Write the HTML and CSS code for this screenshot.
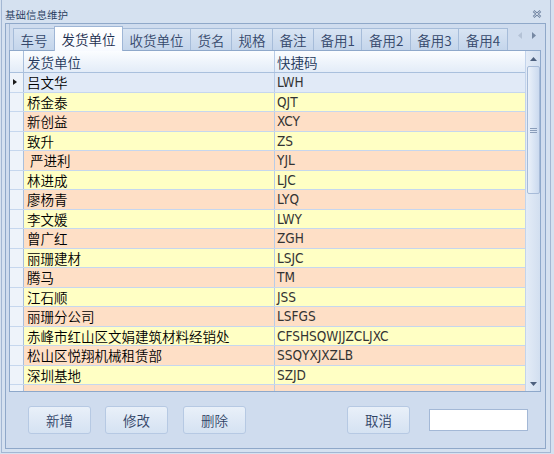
FILE: index.html
```html
<!DOCTYPE html>
<html>
<head>
<meta charset="utf-8">
<link rel="stylesheet" href="styles.css">
</head>
<body>
<div class="window">
  <div class="titlebar">
    <span class="title">基础信息维护</span>
    <svg class="close" width="10" height="8" viewBox="0 0 10 8">
      <path d="M1.5 1 L8.5 7 M8.5 1 L1.5 7" stroke="#6a7f9e" stroke-width="2.4" fill="none"/>
      <path d="M1.5 1 L8.5 7 M8.5 1 L1.5 7" stroke="#eef3fa" stroke-width="0.8" fill="none"/>
    </svg>
  </div>
  <div class="frame">
    <div class="tabstrip">
      <div class="tab">车号</div>
      <div class="tab active">发货单位</div>
      <div class="tab">收货单位</div>
      <div class="tab">货名</div>
      <div class="tab">规格</div>
      <div class="tab">备注</div>
      <div class="tab">备用1</div>
      <div class="tab">备用2</div>
      <div class="tab">备用3</div>
      <div class="tab">备用4</div>
      <div class="tabnav">
        <svg width="4" height="7" viewBox="0 0 4 7"><path d="M4 0 L0 3.5 L4 7 Z" fill="#b4c2d6"/></svg>
        <svg width="4" height="7" viewBox="0 0 4 7"><path d="M0 0 L4 3.5 L0 7 Z" fill="#7688a3"/></svg>
      </div>
    </div>
    <div class="grid">
      <div class="gridmain">
        <div class="ghead">
          <div class="rh"></div>
          <div class="c1">发货单位</div>
          <div class="c2">快捷码</div>
        </div>
        <div class="gbody">
          <div class="row sel"><div class="rh"><svg width="4" height="6" viewBox="0 0 4 6"><path d="M0 0 L4 3 L0 6 Z" fill="#1a1a1a"/></svg></div><div class="c1">吕文华</div><div class="c2">LWH</div></div>
          <div class="row y"><div class="rh"></div><div class="c1">桥金泰</div><div class="c2">QJT</div></div>
          <div class="row p"><div class="rh"></div><div class="c1">新创益</div><div class="c2">XCY</div></div>
          <div class="row y"><div class="rh"></div><div class="c1">致升</div><div class="c2">ZS</div></div>
          <div class="row p"><div class="rh"></div><div class="c1">&nbsp;严进利</div><div class="c2">YJL</div></div>
          <div class="row y"><div class="rh"></div><div class="c1">林进成</div><div class="c2">LJC</div></div>
          <div class="row p"><div class="rh"></div><div class="c1">廖杨青</div><div class="c2">LYQ</div></div>
          <div class="row y"><div class="rh"></div><div class="c1">李文媛</div><div class="c2">LWY</div></div>
          <div class="row p"><div class="rh"></div><div class="c1">曾广红</div><div class="c2">ZGH</div></div>
          <div class="row y"><div class="rh"></div><div class="c1">丽珊建材</div><div class="c2">LSJC</div></div>
          <div class="row p"><div class="rh"></div><div class="c1">腾马</div><div class="c2">TM</div></div>
          <div class="row y"><div class="rh"></div><div class="c1">江石顺</div><div class="c2">JSS</div></div>
          <div class="row p"><div class="rh"></div><div class="c1">丽珊分公司</div><div class="c2">LSFGS</div></div>
          <div class="row y"><div class="rh"></div><div class="c1">赤峰市红山区文娟建筑材料经销处</div><div class="c2">CFSHSQWJJZCLJXC</div></div>
          <div class="row p"><div class="rh"></div><div class="c1">松山区悦翔机械租赁部</div><div class="c2">SSQYXJXZLB</div></div>
          <div class="row y"><div class="rh"></div><div class="c1">深圳基地</div><div class="c2">SZJD</div></div>
          <div class="row p"><div class="rh"></div><div class="c1"></div><div class="c2"></div></div>
        </div>
      </div>
      <div class="vscroll">
        <div class="sarrow top"><svg width="7" height="4" viewBox="0 0 7 4"><path d="M0 4 L3.5 0 L7 4 Z" fill="#4d607e"/></svg></div>
        <div class="thumb"><svg width="7" height="5" viewBox="0 0 7 5"><path d="M0 0.5 H7 M0 2.5 H7 M0 4.5 H7" stroke="#8a9dba" stroke-width="1"/></svg></div>
        <div class="track"></div>
        <div class="sarrow bottom"><svg width="7" height="4" viewBox="0 0 7 4"><path d="M0 0 L3.5 4 L7 0 Z" fill="#4d607e"/></svg></div>
      </div>
    </div>
    <div class="buttons">
      <div class="btn b1">新增</div>
      <div class="btn b2">修改</div>
      <div class="btn b3">删除</div>
      <div class="btn b4">取消</div>
      <div class="textbox"></div>
    </div>
  </div>
</div>
</body>
</html>
```
FILE: styles.css
```css
* { box-sizing: border-box; margin: 0; padding: 0; }
html, body { width: 554px; height: 454px; overflow: hidden; }
body {
  background: #d5e1f0;
  font-family: "Noto Sans CJK SC", "Noto Sans", sans-serif;
  font-size: 13.5px;
  font-weight: 350;
  color: #000;
}
.window {
  margin-left: 1px;
  width: 550px;
  height: 453px;
  border: 1px solid #a3b7d3;
  border-top: 0;
  background: #d5e1f0;
  display: flex;
  flex-direction: column;
}
.titlebar {
  height: 23px;
  display: flex;
  align-items: center;
  padding: 5px 8px 0 3px;
  font-size: 10.5px;
  color: #1e395b;
}
.title { flex: 1; }
.close { display: block; }

.frame {
  margin-left: 3px;
  width: 541px;
  height: 426px;
  border: 1px solid #8fa8c9;
  background: #cfdcee;
  padding: 0 4px 0 3px;
  display: flex;
  flex-direction: column;
}
.tabstrip {
  height: 26px;
  display: flex;
  align-items: flex-end;
  padding-left: 3px;
  border-left: 1px solid #a9bdd8;
}
.tab {
  height: 22px;
  padding: 0 6.5px;
  border: 1px solid #a6bcd9;
  border-bottom: 0;
  margin-right: -1px;
  display: flex;
  align-items: center;
  color: #34476a;
  background: linear-gradient(#d8e4f3, #c4d5eb);
  white-space: nowrap;
}
.tab.active {
  height: 25px;
  margin-bottom: -1px;
  position: relative;
  z-index: 1;
  background: linear-gradient(#ffffff, #f7faff);
  color: #1a2d4d;
  border-color: #9fb6d6;
}
.tabnav {
  align-self: flex-start;
  margin-top: 8px;
  margin-left: 11px;
  display: flex;
  gap: 10px;
}
.tabnav svg { display: block; }

.grid {
  height: 342px;
  border: 1px solid #8ea8ca;
  background: #fff;
  display: flex;
}
.gridmain {
  width: 515px;
  display: flex;
  flex-direction: column;
  overflow: hidden;
}
.ghead {
  height: 22px;
  flex: none;
  display: flex;
  border-bottom: 1px solid #a9c0dd;
  background: linear-gradient(#fbfdff, #e3ecf8);
  color: #24375a;
}
.rh {
  width: 14px;
  flex: none;
  border-right: 1px solid #a9bfdc;
  background: #eef3fa;
  display: flex;
  align-items: center;
  padding-left: 3px;
}
.rh svg { display: block; }
.ghead .rh { background: transparent; }
.c1 {
  width: 251px;
  flex: none;
  border-right: 1px solid #b8cce7;
  padding-left: 3px;
  display: flex;
  align-items: center;
  white-space: pre;
  overflow: hidden;
}
.c2 {
  flex: 1;
  padding-left: 2px;
  display: flex;
  align-items: center;
  overflow: hidden;
}
.gbody {
  flex: 1;
  overflow: hidden;
}
.row {
  height: 19.5px;
  display: flex;
  border-bottom: 1px solid #c6d7ee;
}
.row .c2 {
  font-family: "DejaVu Sans Condensed", "DejaVu Sans", sans-serif;
  font-stretch: condensed;
  font-weight: 400;
  font-size: 13.5px;
  color: #333;
}
.row.y { background: #ffffc4; }
.row.p { background: #fedfc6; }
.row.sel { background: #e1eaf7; }

.vscroll {
  width: 15px;
  flex: none;
  border-left: 1px solid #c3d4ec;
  background: linear-gradient(90deg, #e4ecf7, #d2dff0);
  display: flex;
  flex-direction: column;
}
.sarrow {
  display: flex;
  justify-content: center;
  align-items: center;
  padding-left: 1px;
}
.sarrow.top { height: 15px; }
.sarrow.bottom { height: 14px; padding-bottom: 1px; }
.thumb {
  margin-left: 1px;
  width: 13px;
  height: 128px;
  border: 1px solid #a7bbd8;
  border-radius: 2px;
  background: linear-gradient(90deg, #eaf1fa, #cbdaef);
  display: flex;
  justify-content: center;
  align-items: center;
}
.thumb svg { display: block; }
.track { flex: 1; }

.buttons {
  display: flex;
  align-items: flex-start;
  margin-top: 14px;
}
.btn {
  width: 63px;
  height: 28px;
  border: 1px solid #b6c9e3;
  border-radius: 3px;
  background: linear-gradient(#e9f0f9, #d5e2f2);
  color: #2f4265;
  display: flex;
  align-items: center;
  justify-content: center;
}
.b1 { margin-left: 19px; }
.b2 { margin-left: 14px; }
.b3 { margin-left: 15px; }
.b4 { margin-left: 101px; }
.textbox {
  margin-left: 19px;
  margin-top: 3px;
  width: 99px;
  height: 22px;
  background: #fff;
  border: 1px solid #a3b8d6;
}
```
